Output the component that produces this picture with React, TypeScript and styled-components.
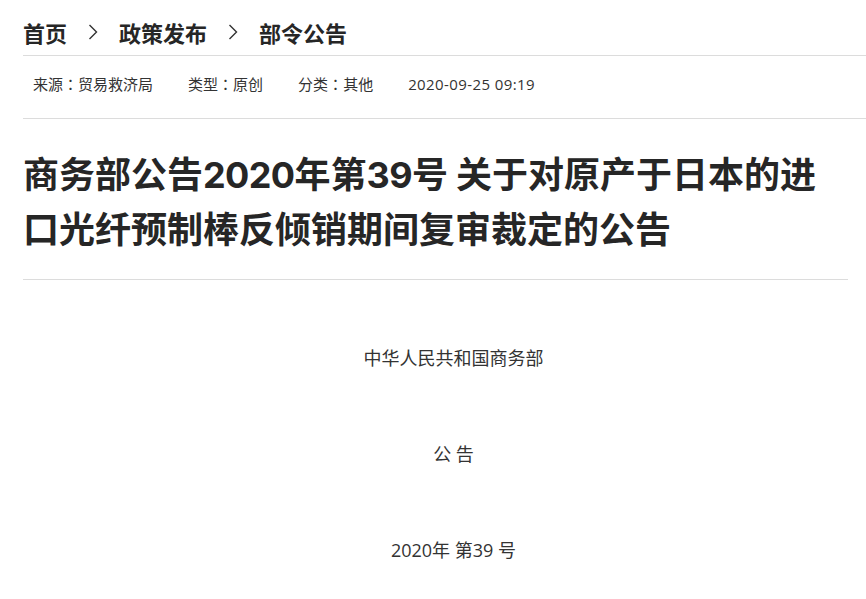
import { Fragment } from "react";
import styled, { createGlobalStyle } from "styled-components";

const GlobalStyle = createGlobalStyle`
  body {
    margin: 0;
    background: #fff;
    font-family: "Open Sans", "Noto Sans CJK SC", sans-serif;
    color: #333;
  }
`;

const Page = styled.div`
  padding-left: 23px;
  overflow: hidden;
`;

const Breadcrumb = styled.nav`
  display: flex;
  align-items: center;
  gap: 21px;
  padding: 12px 0 3px;
  border-bottom: 1px solid #dcdcdc;
`;

const Crumb = styled.a`
  font-family: "Noto Sans CJK SC", sans-serif;
  font-size: 22px;
  font-weight: bold;
  line-height: 40px;
  color: #262626;
  text-decoration: none;
`;

const Chevron = () => (
  <svg width="10" height="16" viewBox="0 0 10 16" fill="none">
    <polyline
      points="1.5,1 8.5,8 1.5,15"
      stroke="#333"
      strokeWidth="1.4"
      strokeLinejoin="miter"
    />
  </svg>
);

const MetaBar = styled.div`
  display: flex;
  gap: 35px;
  padding: 18px 0 24px 10px;
  border-bottom: 1px solid #dcdcdc;
`;

const MetaItem = styled.span<{ $date?: boolean }>`
  font-size: 15px;
  line-height: 20px;
  color: #333;
  letter-spacing: ${(p) => (p.$date ? "0.4px" : "0")};
`;

// centred full-width colon, as in the original page font
const Colon = styled.span`
  font-family: "Noto Sans CJK TC", sans-serif;
`;

const TitleBlock = styled.header`
  width: 825px;
  padding: 26px 0 24px;
  border-bottom: 1px solid #dcdcdc;
`;

const Title = styled.h1`
  width: 800px;
  margin: 0;
  font-family: "Noto Sans CJK SC", sans-serif;
  font-size: 36px;
  font-weight: bold;
  line-height: 55px;
  color: #262626;
`;

const Num = styled.span`
  font-family: Inter, "Open Sans", sans-serif;
  line-height: 1;
  letter-spacing: -0.6px;
`;

const Body = styled.div`
  width: 825px;
  display: flex;
  flex-direction: column;
  gap: 60px;
  padding-top: 60px;
`;

const Para = styled.p`
  margin: 0;
  font-size: 18px;
  line-height: 36px;
  text-align: center;
  text-indent: 2em;
  color: #333;
`;

const crumbs = ["首页", "政策发布", "部令公告"];
const meta = [
  ["来源", "贸易救济局"],
  ["类型", "原创"],
  ["分类", "其他"],
];

export default function App() {
  return (
    <>
      <GlobalStyle />
      <Page>
        <Breadcrumb>
          {crumbs.map((c, i) => (
            <Fragment key={c}>
              {i > 0 && <Chevron />}
              <Crumb href="#">{c}</Crumb>
            </Fragment>
          ))}
        </Breadcrumb>
        <MetaBar>
          {meta.map(([k, v]) => (
            <MetaItem key={k}>
              {k}
              <Colon>：</Colon>
              {v}
            </MetaItem>
          ))}
          <MetaItem $date>2020-09-25 09:19</MetaItem>
        </MetaBar>
        <TitleBlock>
          <Title>
            商务部公告<Num>2020</Num>年第<Num>39</Num>号<Num> </Num>
            关于对原产于日本的进口光纤预制棒反倾销期间复审裁定的公告
          </Title>
        </TitleBlock>
        <Body>
          <Para>中华人民共和国商务部</Para>
          <Para>公 告</Para>
          <Para>2020年 第39 号</Para>
        </Body>
      </Page>
    </>
  );
}
